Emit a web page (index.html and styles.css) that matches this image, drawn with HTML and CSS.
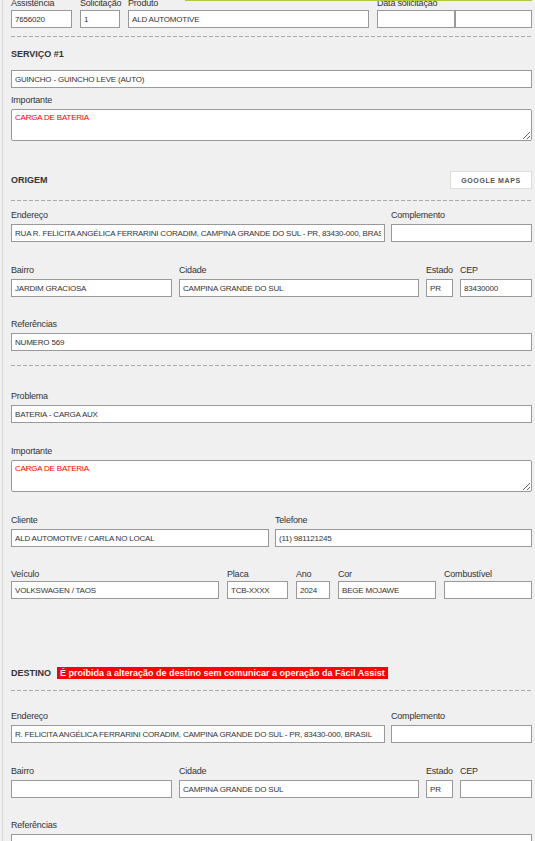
FILE: index.html
```html
<!DOCTYPE html>
<html lang="pt-BR">
<head>
<meta charset="utf-8">
<title>Serviço</title>
<link rel="stylesheet" href="styles.css">
</head>
<body>
<div class="topline"></div>
<div class="frame">

  <div class="row r-top mt-first">
    <div class="field"><label>Assistência</label><input class="inp" value="7656020"></div>
    <div class="field"><label>Solicitação</label><input class="inp" value="1"></div>
    <div class="field"><label>Produto</label><input class="inp" value="ALD AUTOMOTIVE"></div>
    <div class="field"><label>Data solicitação</label>
      <div class="pair"><input class="inp" value=""><input class="inp" value=""></div>
    </div>
  </div>

  <div class="dash mt8"></div>

  <h2 class="heading mt11">SERVIÇO #1</h2>
  <input class="inp mt10" value="GUINCHO - GUINCHO LEVE (AUTO)">

  <div class="field mt8"><label>Importante</label><textarea class="inp area">CARGA DE BATERIA</textarea></div>

  <div class="section-bar mt30">
    <h2 class="heading">ORIGEM</h2>
    <button class="gmaps" type="button">GOOGLE MAPS</button>
  </div>

  <div class="dash mt11"></div>

  <div class="row r-end mt10">
    <div class="field"><label>Endereço</label><input class="inp" value="RUA R. FELICITA ANGÉLICA FERRARINI CORADIM, CAMPINA GRANDE DO SUL - PR, 83430-000, BRASIL"></div>
    <div class="field"><label>Complemento</label><input class="inp" value=""></div>
  </div>

  <div class="row r-bairro mt24">
    <div class="field"><label>Bairro</label><input class="inp" value="JARDIM GRACIOSA"></div>
    <div class="field"><label>Cidade</label><input class="inp" value="CAMPINA GRANDE DO SUL"></div>
    <div class="field"><label>Estado</label><input class="inp" value="PR"></div>
    <div class="field"><label>CEP</label><input class="inp" value="83430000"></div>
  </div>

  <div class="field mt23"><label>Referências</label><input class="inp" value="NUMERO 569"></div>

  <div class="dash mt14"></div>

  <div class="field mt26"><label>Problema</label><input class="inp" value="BATERIA - CARGA AUX"></div>

  <div class="field mt24"><label>Importante</label><textarea class="inp area">CARGA DE BATERIA</textarea></div>

  <div class="row r-cli mt24">
    <div class="field"><label>Cliente</label><input class="inp" value="ALD AUTOMOTIVE / CARLA NO LOCAL"></div>
    <div class="field"><label>Telefone</label><input class="inp" value="(11) 981121245"></div>
  </div>

  <div class="row r-veic mt21">
    <div class="field"><label>Veículo</label><input class="inp" value="VOLKSWAGEN / TAOS"></div>
    <div class="field"><label>Placa</label><input class="inp" value="TCB-XXXX"></div>
    <div class="field"><label>Ano</label><input class="inp" value="2024"></div>
    <div class="field"><label>Cor</label><input class="inp" value="BEGE MOJAWE"></div>
    <div class="field"><label>Combustível</label><input class="inp" value=""></div>
  </div>

  <div class="dest-bar mt68">
    <h2 class="heading">DESTINO</h2>
    <span class="warn">É proibida a alteração de destino sem comunicar a operação da Fácil Assist</span>
  </div>

  <div class="dash mt11"></div>

  <div class="row r-end mt21">
    <div class="field"><label>Endereço</label><input class="inp" value="R. FELICITA ANGÉLICA FERRARINI CORADIM, CAMPINA GRANDE DO SUL - PR, 83430-000, BRASIL"></div>
    <div class="field"><label>Complemento</label><input class="inp" value=""></div>
  </div>

  <div class="row r-bairro mt24">
    <div class="field"><label>Bairro</label><input class="inp" value=""></div>
    <div class="field"><label>Cidade</label><input class="inp" value="CAMPINA GRANDE DO SUL"></div>
    <div class="field"><label>Estado</label><input class="inp" value="PR"></div>
    <div class="field"><label>CEP</label><input class="inp" value=""></div>
  </div>

  <div class="field mt23"><label>Referências</label><input class="inp" value=""></div>

</div>
</body>
</html>
```

FILE: styles.css
```css
html, body {
  margin: 0;
  background: #f0f0f0;
}

body {
  font-family: "Liberation Sans", Arial, sans-serif;
  color: #333;
  overflow: hidden;
}

.topline {
  position: absolute;
  top: 0;
  left: 185px;
  width: 347px;
  height: 1px;
  background: #b3c93a;
  z-index: 2;
}

.frame {
  display: flow-root;
  margin-left: 2px;
  border-left: 1px solid #d6d6d6;
  padding: 0 3px 0 8px;
  min-height: 900px;
}

.field label {
  display: block;
  font-size: 9px;
  line-height: 8px;
  margin-bottom: 5px;
  letter-spacing: -0.2px;
  white-space: nowrap;
  color: #333;
}

.r-veic .field label,
.r-top .field label {
  line-height: 12px;
  margin-bottom: 1px;
}

.inp {
  display: block;
  box-sizing: border-box;
  width: 100%;
  height: 18px;
  margin: 0;
  padding: 0 3px;
  border: 1px solid #999;
  border-radius: 0;
  background: #fff;
  font-family: "Liberation Sans", Arial, sans-serif;
  font-size: 8px;
  letter-spacing: -0.2px;
  color: #333;
  outline: none;
}

.area {
  height: 32px;
  padding: 3px 3px 2px;
  border-radius: 2px;
  line-height: 10px;
  color: #f00;
  resize: vertical;
}

.row {
  display: grid;
}

.r-top {
  grid-template-columns: 61px 40px 241px 1fr;
  column-gap: 8px;
}

.pair {
  display: flex;
}

.pair .inp {
  width: 50%;
}

.r-end {
  grid-template-columns: 374px 1fr;
  column-gap: 6px;
}

.r-bairro {
  grid-template-columns: 161px 240px 27px 1fr;
  column-gap: 7px;
}

.r-cli {
  grid-template-columns: 258px 1fr;
  column-gap: 6px;
}

.r-veic {
  grid-template-columns: 208px 61px 34px 98px 1fr;
  column-gap: 8px;
}

.heading {
  margin: 0;
  font-size: 9px;
  line-height: 12px;
  font-weight: bold;
  color: #333;
}

.section-bar {
  display: flex;
  align-items: center;
  justify-content: space-between;
  height: 18px;
}

.gmaps {
  box-sizing: border-box;
  width: 82px;
  height: 18px;
  margin: 0;
  padding: 0;
  border: 1px solid #ddd;
  background: #fff;
  font-family: "Liberation Sans", Arial, sans-serif;
  font-size: 7px;
  font-weight: bold;
  letter-spacing: 0.6px;
  color: #555;
}

.dest-bar {
  display: flex;
  align-items: center;
  gap: 6px;
  height: 12px;
}

.warn {
  display: inline-block;
  background: #f00;
  color: #fff;
  font-size: 9px;
  font-weight: bold;
  line-height: 12px;
  padding: 0 3px;
  white-space: nowrap;
}

.dash {
  height: 1px;
  background: repeating-linear-gradient(to right, #aaa 0 4px, transparent 4px 6px);
}

.mt-first { margin-top: -3px; }
.mt8 { margin-top: 8px; }
.mt10 { margin-top: 10px; }
.mt11 { margin-top: 11px; }
.mt14 { margin-top: 14px; }
.mt21 { margin-top: 21px; }
.mt23 { margin-top: 23px; }
.mt24 { margin-top: 24px; }
.mt26 { margin-top: 26px; }
.mt30 { margin-top: 30px; }
.mt68 { margin-top: 68px; }
```
